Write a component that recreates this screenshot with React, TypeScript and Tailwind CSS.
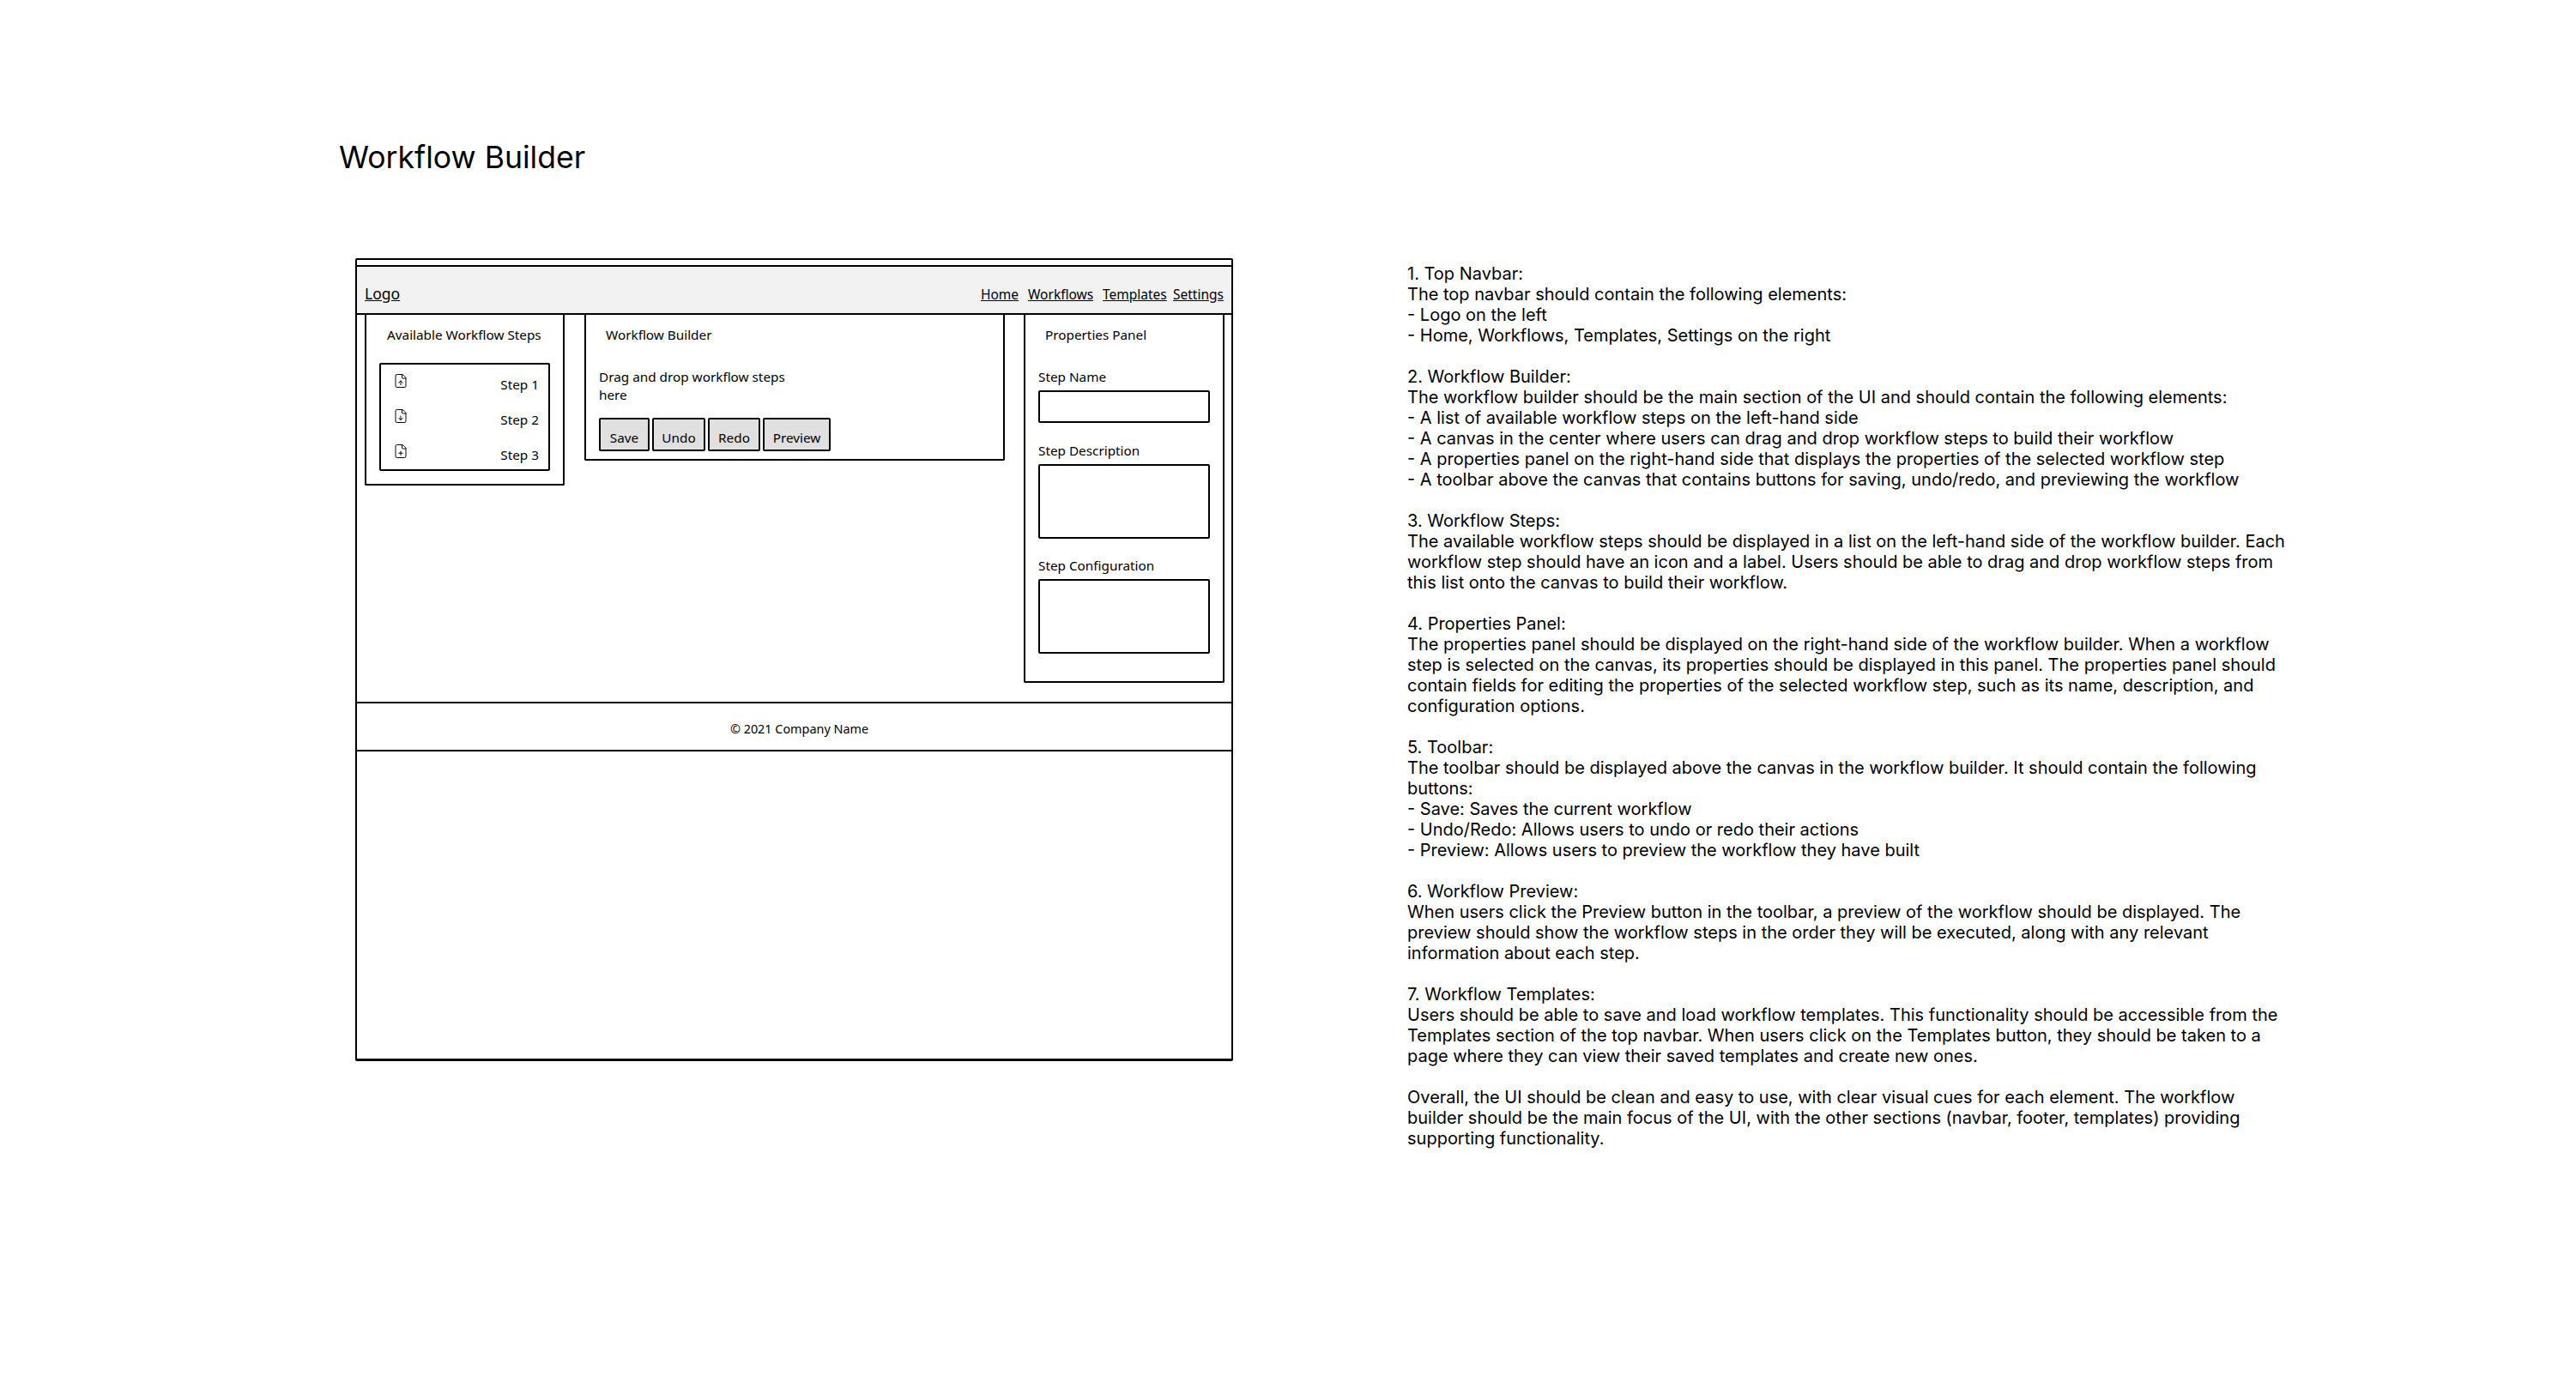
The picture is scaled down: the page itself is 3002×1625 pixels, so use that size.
import { FileDown, FilePlus, FileUp } from "lucide-react";

const notes = `1. Top Navbar:
The top navbar should contain the following elements:
- Logo on the left
- Home, Workflows, Templates, Settings on the right

2. Workflow Builder:
The workflow builder should be the main section of the UI and should contain the following elements:
- A list of available workflow steps on the left-hand side
- A canvas in the center where users can drag and drop workflow steps to build their workflow
- A properties panel on the right-hand side that displays the properties of the selected workflow step
- A toolbar above the canvas that contains buttons for saving, undo/redo, and previewing the workflow

3. Workflow Steps:
The available workflow steps should be displayed in a list on the left-hand side of the workflow builder. Each
workflow step should have an icon and a label. Users should be able to drag and drop workflow steps from
this list onto the canvas to build their workflow.

4. Properties Panel:
The properties panel should be displayed on the right-hand side of the workflow builder. When a workflow
step is selected on the canvas, its properties should be displayed in this panel. The properties panel should
contain fields for editing the properties of the selected workflow step, such as its name, description, and
configuration options.

5. Toolbar:
The toolbar should be displayed above the canvas in the workflow builder. It should contain the following
buttons:
- Save: Saves the current workflow
- Undo/Redo: Allows users to undo or redo their actions
- Preview: Allows users to preview the workflow they have built

6. Workflow Preview:
When users click the Preview button in the toolbar, a preview of the workflow should be displayed. The
preview should show the workflow steps in the order they will be executed, along with any relevant
information about each step.

7. Workflow Templates:
Users should be able to save and load workflow templates. This functionality should be accessible from the
Templates section of the top navbar. When users click on the Templates button, they should be taken to a
page where they can view their saved templates and create new ones.

Overall, the UI should be clean and easy to use, with clear visual cues for each element. The workflow
builder should be the main focus of the UI, with the other sections (navbar, footer, templates) providing
supporting functionality.`;

const steps = [
  { icon: FileUp, label: "Step 1" },
  { icon: FileDown, label: "Step 2" },
  { icon: FilePlus, label: "Step 3" },
];

const navLinks = [
  { label: "Home", className: "w-[39px]" },
  { label: "Workflows", className: "ml-[16px] w-[76px]" },
  { label: "Templates", className: "ml-[11px] w-[72px]" },
  { label: "Settings", className: "ml-[10px] w-[59px]" },
];

const toolbar = [
  { label: "Save", className: "w-[59px]" },
  { label: "Undo", className: "w-[62px]" },
  { label: "Redo", className: "w-[61px]" },
  { label: "Preview", className: "w-[79px]" },
];

const fields = [
  { label: "Step Name", gap: "mt-[29px]", className: "h-[38px]" },
  { label: "Step Description", gap: "mt-[22px]", className: "h-[87px]" },
  { label: "Step Configuration", gap: "mt-[21px]", className: "h-[87px]" },
];

export default function App() {
  return (
    <div className="flex h-[1625px] w-[3002px] items-start overflow-hidden bg-white font-['Inter',sans-serif] text-black">
      {/* wireframe column */}
      <div className="ml-[395px] w-[1042px] pt-[161px]">
        <h1 className="h-[140px] text-[35.6px] leading-[46px] font-normal">Workflow Builder</h1>
        <div className="ml-[19px] h-[936px] w-[1023px] rounded-[2px] border-2 border-b-[3px] border-black pt-[6px] font-['Noto_Sans',sans-serif] text-[15.3px] leading-[20px]">
          <nav className="flex h-[58px] items-end justify-between border-y-2 border-black bg-[#f2f2f2] pr-[9px] pb-[12px] pl-[9px]">
            <span className="-mb-[1px] text-[17.5px] leading-[24px] underline">Logo</span>
            <div className="flex text-[15.5px] leading-[20px] underline">
              {navLinks.map((link) => (
                <span key={link.label} className={link.className}>
                  {link.label}
                </span>
              ))}
            </div>
          </nav>

          <div className="flex h-[451px] items-start pl-[9px]">
            <section className="h-[199px] w-[233px] rounded-b-[2px] border-x-2 border-b-2 border-black pt-[13px]">
              <h2 className="pl-[24px] font-normal">Available Workflow Steps</h2>
              <ul className="mt-[23px] ml-[15px] h-[126px] w-[199px] rounded-[2px] border-2 border-black">
                {steps.map((step) => (
                  <li key={step.label} className="flex h-[41px] justify-between pt-[10px] pr-[11px] pl-[14px]">
                    <step.icon size={18} strokeWidth={1.3} />
                    <span className="pt-[3px]">{step.label}</span>
                  </li>
                ))}
              </ul>
            </section>

            <section className="ml-[23px] h-[170px] w-[490px] rounded-b-[2px] border-x-2 border-b-2 border-black pt-[13px] pl-[15px]">
              <h2 className="pl-[8px] font-normal">Workflow Builder</h2>
              <p className="mt-[29px] w-[240px] leading-[21px]">Drag and drop workflow steps here</p>
              <div className="mt-[16px] flex gap-[3px]">
                {toolbar.map((item) => (
                  <button
                    key={item.label}
                    className={`h-[39px] rounded-[2px] border-2 border-black bg-[#e0e0e0] pt-[6px] text-center ${item.className}`}
                  >
                    {item.label}
                  </button>
                ))}
              </div>
            </section>

            <section className="ml-[22px] h-[429px] w-[234px] rounded-b-[2px] border-x-2 border-b-2 border-black pt-[13px] pl-[15px]">
              <h2 className="pl-[8px] font-normal">Properties Panel</h2>
              {fields.map((field) => (
                <div key={field.label} className={field.gap}>
                  <label className="block h-[20px] leading-[20px]">{field.label}</label>
                  <div className={`mt-[6px] w-[200px] rounded-[2px] border-2 border-black ${field.className}`} />
                </div>
              ))}
            </section>
          </div>

          <footer className="flex h-[58px] items-center justify-center border-y-2 border-black pt-[5px] text-[14.4px]">
            <span className="ml-[12px]">© 2021 Company Name</span>
          </footer>
        </div>
      </div>

      {/* requirements column */}
      <div className="ml-[203px] pt-[307px] text-[20px] leading-[24px] whitespace-pre">{notes}</div>
    </div>
  );
}
